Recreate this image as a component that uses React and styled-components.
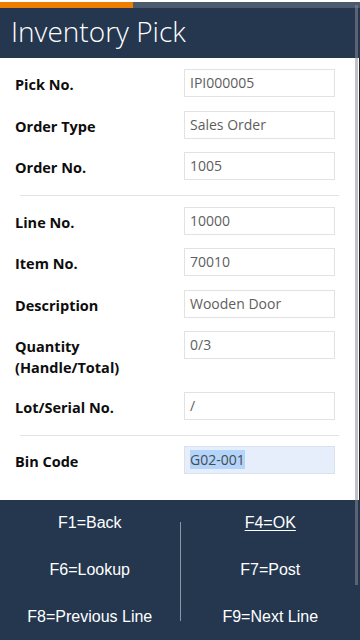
import React from "react";
import styled, { createGlobalStyle } from "styled-components";

const fields = [
	{ label: "Pick No.", value: "IPI000005" },
	{ label: "Order Type", value: "Sales Order" },
	{ label: "Order No.", value: "1005" },
	{ divider: true },
	{ label: "Line No.", value: "10000" },
	{ label: "Item No.", value: "70010" },
	{ label: "Description", value: "Wooden Door" },
	{ label: ["Quantity", "(Handle/Total)"], value: "0/3" },
	{ label: "Lot/Serial No.", value: "/" },
	{ divider: true },
	{ label: "Bin Code", value: "G02-001", focused: true },
];

const keys = [
	{ text: "F1=Back" },
	{ text: "F4=OK", active: true },
	{ text: "F6=Lookup" },
	{ text: "F7=Post" },
	{ text: "F8=Previous Line" },
	{ text: "F9=Next Line" },
];

const App = () => {
	return (
		<>
			<GlobalStyle />
			<Page>
				<Progress>
					<ProgressFill />
				</Progress>
				<Header>Inventory Pick</Header>
				<Form>
					{fields.map((f, idx) => {
						if (f.divider) return <Divider key={idx} />;
						const lines = Array.isArray(f.label) ? f.label : [f.label];

						return (
							<Row key={idx}>
								<Label>
									{lines.map((l) => (
										<span key={l}>{l}</span>
									))}
								</Label>
								<Input $focused={f.focused}>
									{f.focused ? <Selected>{f.value}</Selected> : f.value}
								</Input>
							</Row>
						);
					})}
				</Form>
				<Footer>
					{keys.map((k, idx) => (
						<KeyCell
							key={k.text}
							$row={Math.floor(idx / 2) + 1}
							$col={idx % 2 === 0 ? 1 : 3}
							$active={k.active}
						>
							{k.text}
						</KeyCell>
					))}
					<KeyDivider />
				</Footer>
				<ScrollThumb />
			</Page>
		</>
	);
};

const GlobalStyle = createGlobalStyle`
	html, body {
		margin: 0;
		padding: 0;
		background: #ffffff;
	}
	* {
		box-sizing: border-box;
	}
`;

const Page = styled.div`
	position: relative;
	width: 360px;
	height: 640px;
	display: flex;
	flex-direction: column;
	overflow: hidden;
	background: #ffffff;
`;

const Progress = styled.div`
	margin-top: 2px;
	height: 6px;
	background: #4b5a6c;
	display: flex;
`;

const ProgressFill = styled.div`
	width: 133px;
	background: #f07c00;
`;

const Header = styled.h1`
	margin: 0;
	height: 50px;
	padding: 5px 0 0 11px;
	background: #24374f;
	color: #ffffff;
	font-family: "Open Sans", sans-serif;
	font-weight: 300;
	font-size: 28px;
	line-height: 36px;
	white-space: nowrap;
`;

const Form = styled.div`
	flex: 1;
	display: flex;
	flex-direction: column;
	gap: 13.5px;
	padding: 11px 0 0 15px;
	border-right: 1px solid #222;
`;

const Row = styled.div`
	display: grid;
	grid-template-columns: 169px 151px;
	align-items: start;
`;

const Label = styled.div`
	display: flex;
	flex-direction: column;
	padding-top: 5px;
	font-family: "Open Sans", sans-serif;
	font-weight: 700;
	font-size: 14.5px;
	line-height: 21px;
	color: #0d0d0d;
`;

const Input = styled.div`
	height: 28px;
	padding: 0 5px;
	border: 1px solid ${(p) => (p.$focused ? "#dae2ee" : "#e2e2e2")};
	background: ${(p) => (p.$focused ? "#e6eefb" : "#ffffff")};
	font-family: "Open Sans", sans-serif;
	font-size: 14px;
	line-height: 25px;
	color: #5e5e5e;
	white-space: nowrap;
`;

const Selected = styled.span`
	background: #b3d4fb;
	color: #4a4a4a;
`;

const Divider = styled.hr`
	margin: 1.5px 20px -3px 5px;
	border: 0;
	border-top: 1px solid #e3e3e3;
`;

const Footer = styled.div`
	height: 140px;
	background: #24374f;
	display: grid;
	grid-template-columns: 1fr 1px 1fr;
	grid-template-rows: repeat(3, 47px);
`;

const KeyCell = styled.div`
	grid-row: ${(p) => p.$row};
	grid-column: ${(p) => p.$col};
	display: flex;
	align-items: center;
	justify-content: center;
	padding-bottom: 1px;
	font-family: "Liberation Sans", Arial, sans-serif;
	font-size: 16px;
	color: #ffffff;
	text-decoration: ${(p) => (p.$active ? "underline" : "none")};
	text-underline-offset: 2px;
`;

const KeyDivider = styled.div`
	grid-row: 1 / 4;
	grid-column: 2;
	margin: 22px 0 20px;
	background: #8a96a6;
`;

const ScrollThumb = styled.div`
	position: absolute;
	top: 5px;
	right: 2px;
	width: 3px;
	height: 580px;
	background: rgba(137, 140, 150, 0.53);
`;

export default App;
